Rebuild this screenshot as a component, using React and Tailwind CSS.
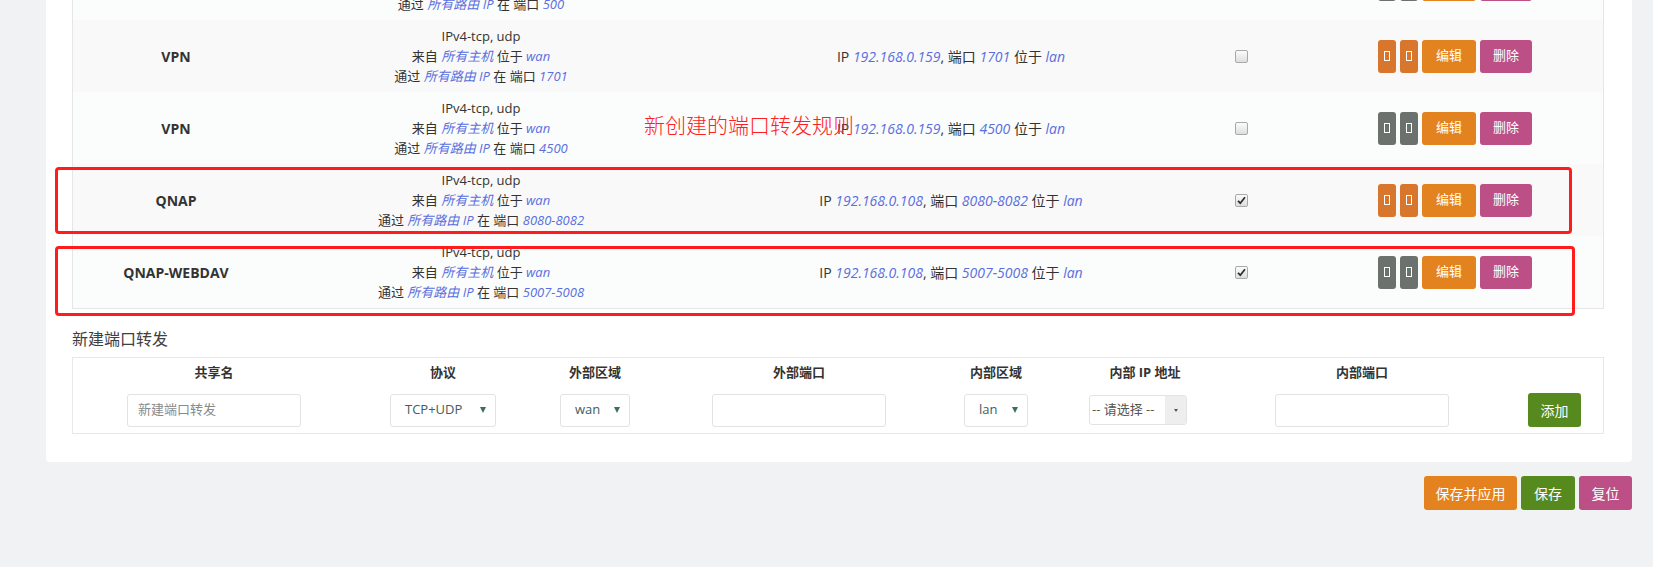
import React from 'react';

const rules = [
  { name: 'VPN', port: '500', ip: '192.168.0.159', enabled: false, checked: false, bg: 'bg-[#fbfcfc]' },
  { name: 'VPN', port: '1701', ip: '192.168.0.159', enabled: true, checked: false, bg: 'bg-[#f9f9f9]' },
  { name: 'VPN', port: '4500', ip: '192.168.0.159', enabled: false, checked: false, bg: 'bg-[#fbfcfc]' },
  { name: 'QNAP', port: '8080-8082', ip: '192.168.0.108', enabled: true, checked: true, bg: 'bg-[#f9f9f9]', box: 'first' },
  { name: 'QNAP-WEBDAV', port: '5007-5008', ip: '192.168.0.108', enabled: false, checked: true, bg: 'bg-[#fbfcfc]', box: 'second' },
];

const Em = ({ children }) => <span className="italic text-[#5a6fdf]">{children}</span>;

const Checkbox = ({ checked }) => (
  <span className="w-[13px] h-[13px] rounded-[2px] border border-[#a9a9a9] bg-gradient-to-b from-[#fcfcfc] to-[#dedede] flex items-center justify-center">
    {checked && (
      <svg width="9" height="9" viewBox="0 0 9 9">
        <path d="M1 4.8 L3.3 7.2 L8 1.2" stroke="#2f2f2f" strokeWidth="1.8" fill="none" />
      </svg>
    )}
  </span>
);

const SmallBtn = ({ enabled }) => (
  <button className={`w-[18px] h-[33px] rounded-[3px] flex items-center justify-center ${enabled ? 'bg-[#d9762d]' : 'bg-[#6b716d]'}`}>
    <span className="w-[6px] h-[10px] border border-white"></span>
  </button>
);

const Row = ({ rule }) => (
  <div className={`relative grid grid-cols-[206px_404px_536px_44px_1fr] h-[72px] items-center ${rule.bg}`}>
    <div className="text-center font-bold text-[14px] text-[#333]">{rule.name}</div>
    <div className="text-center text-[13px] leading-[20px] text-[#333]">
      <div>IPv4-tcp, udp</div>
      <div>来自 <Em>所有主机</Em> 位于 <Em>wan</Em></div>
      <div>通过 <Em>所有路由 IP</Em> 在 端口 <Em>{rule.port}</Em></div>
    </div>
    <div className="text-center text-[14px] text-[#333]">
      IP <Em>{rule.ip}</Em>, 端口 <Em>{rule.port}</Em> 位于 <Em>lan</Em>
    </div>
    <div className="flex justify-center">
      <Checkbox checked={rule.checked} />
    </div>
    <div className="flex items-center gap-[4px] pl-[115px] text-[13px] text-white">
      <SmallBtn enabled={rule.enabled} />
      <SmallBtn enabled={rule.enabled} />
      <button className="w-[54px] h-[33px] rounded-[3px] bg-[#e3831f]">编辑</button>
      <button className="w-[52px] h-[33px] rounded-[3px] bg-[#bc4f85]">删除</button>
    </div>

    {/* red highlight boxes drawn over the rows */}
    {rule.box === 'first' && (
      <div className="absolute left-[-18px] top-[3px] w-[1517px] h-[67px] border-[3px] border-[#ff1c1c] rounded-[4px] pointer-events-none"></div>
    )}
    {rule.box === 'second' && (
      <div className="absolute left-[-18px] top-[10px] w-[1520px] h-[70px] border-[3px] border-[#ff1c1c] rounded-[4px] pointer-events-none"></div>
    )}
    {rule.port === '4500' && (
      <div className="absolute left-[571px] top-[21px] text-[21px] leading-[24px] text-[#ff2020] font-light whitespace-nowrap">
        新创建的端口转发规则
      </div>
    )}
  </div>
);

const Arrow = () => (
  <span className="w-0 h-0 border-l-[3px] border-r-[3px] border-t-[6px] border-l-transparent border-r-transparent border-t-[#3f6e5e]"></span>
);

const Select = ({ value, width }) => (
  <div className={`${width} h-[33px] border border-[#e3e3e3] rounded-[3px] bg-white flex items-center justify-between pl-[14px] pr-[9px] text-[13px] text-[#40605c]`}>
    <span>{value}</span>
    <Arrow />
  </div>
);

const TextInput = ({ placeholder }) => (
  <div className="w-[174px] h-[33px] border border-[#e3e3e3] rounded-[3px] bg-white flex items-center pl-[10px] text-[13px] text-[#8a8a8a]">
    {placeholder}
  </div>
);

const headers = ['共享名', '协议', '外部区域', '外部端口', '内部区域', '内部 IP 地址', '内部端口', ''];

const App = () => {
  return (
    <div className="h-[567px] overflow-hidden bg-[#f1f2f4] font-['Open_Sans','Noto_Sans_CJK_SC',sans-serif]">
      <div className="-mt-[52px] ml-[46px] w-[1586px] bg-white rounded-b-[4px] pl-[26px] pr-[28px] pb-[28px]">
        {/* existing rules */}
        <div className="border-l border-r border-b border-[#e6e6e6]">
          {rules.map((rule, index) => (
            <Row key={index} rule={rule} />
          ))}
        </div>

        {/* new rule form */}
        <h3 className="mt-[19px] text-[16px] leading-[22px] text-[#404040]">新建端口转发</h3>
        <div className="mt-[7px] border border-[#e8e8e8]">
          <div className="grid grid-cols-[282px_176px_128px_280px_114px_184px_250px_1fr] h-[29px] items-center text-[13px] font-bold text-[#333]">
            {headers.map((h, i) => (
              <div key={i} className="text-center">{h}</div>
            ))}
          </div>
          <div className="grid grid-cols-[282px_176px_128px_280px_114px_184px_250px_1fr] items-center pt-[6px] pb-[6px]">
            <div className="flex justify-center"><TextInput placeholder="新建端口转发" /></div>
            <div className="flex justify-center"><Select value="TCP+UDP" width="w-[106px]" /></div>
            <div className="flex justify-center"><Select value="wan" width="w-[70px]" /></div>
            <div className="flex justify-center"><TextInput placeholder="" /></div>
            <div className="flex justify-center"><Select value="lan" width="w-[64px]" /></div>
            <div className="flex justify-center pr-[14px]">
              <div className="w-[98px] h-[30px] border border-[#e3e3e3] rounded-[3px] bg-white flex items-stretch text-[13px] text-[#555]">
                <span className="flex-1 flex items-center pl-[2px] whitespace-nowrap">-- 请选择 --</span>
                <span className="w-[21px] bg-[#eeeeee] flex items-center justify-center">
                  <span className="w-0 h-0 border-l-[2px] border-r-[2px] border-t-[3px] border-l-transparent border-r-transparent border-t-[#555]"></span>
                </span>
              </div>
            </div>
            <div className="flex justify-center"><TextInput placeholder="" /></div>
            <div className="flex pl-[41px]">
              <button className="w-[53px] h-[34px] rounded-[3px] bg-[#578a1e] text-white text-[14px]">添加</button>
            </div>
          </div>
        </div>
      </div>

      {/* page actions */}
      <div className="flex justify-end gap-[4px] mt-[14px] pr-[21px] text-[14px] text-white">
        <button className="w-[93px] h-[34px] rounded-[3px] bg-[#e3821f]">保存并应用</button>
        <button className="w-[54px] h-[34px] rounded-[3px] bg-[#578a1e]">保存</button>
        <button className="w-[53px] h-[34px] rounded-[3px] bg-[#bc4f85]">复位</button>
      </div>
    </div>
  );
};

export default App;
